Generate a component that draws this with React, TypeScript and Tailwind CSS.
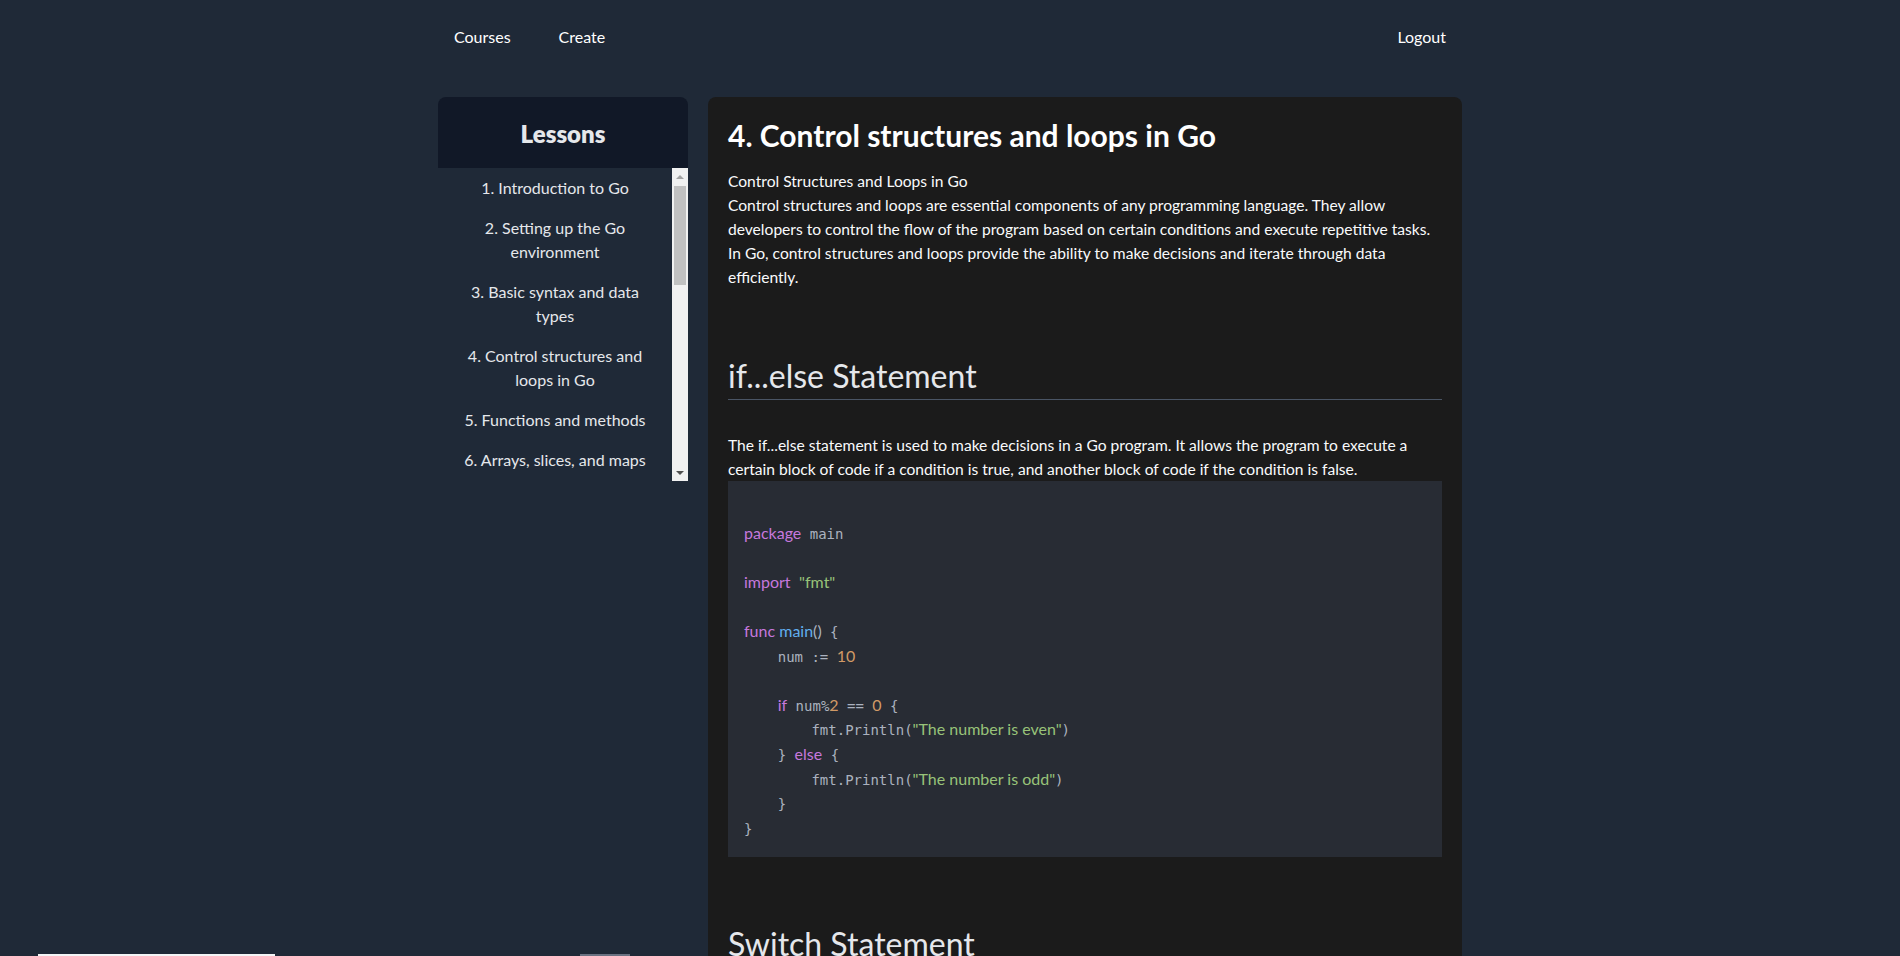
const lessons = [
  "1. Introduction to Go",
  "2. Setting up the Go environment",
  "3. Basic syntax and data types",
  "4. Control structures and loops in Go",
  "5. Functions and methods",
  "6. Arrays, slices, and maps",
  "7. Pointers and memory management",
  "8. Structs and interfaces",
  "9. Error handling",
  "10. Concurrency with goroutines",
  "11. Channels and synchronization",
  "12. Packages and modules",
  "13. File I/O",
  "14. Testing and benchmarking",
  "15. Building web applications",
  "16. Working with databases",
];

const lato = "[font-family:Lato,sans-serif] text-[16px] leading-[16px]";
const kw = `text-[#c678dd] ${lato}`;
const str = `text-[#98c379] ${lato}`;
const num = `text-[#d19a66] ${lato}`;
const fn = `text-[#61afef] ${lato}`;

const Nav = () => (
  <nav className="flex items-center justify-between pt-[17px] pb-4">
    <div className="flex gap-4">
      <a className="px-4 py-2 leading-6 text-white">Courses</a>
      <a className="px-4 py-2 leading-6 text-white">Create</a>
    </div>
    <a className="px-4 py-2 leading-6 text-white">Logout</a>
  </nav>
);

// the page's native scrollbar, drawn since the headless browser hides it
const Scrollbar = () => (
  <div className="flex w-4 shrink-0 flex-col bg-[#f1f1f1]">
    <div className="flex h-[17px] items-center justify-center">
      <span className="h-0 w-0 border-x-[4px] border-b-[4px] border-x-transparent border-b-[#a3a3a3]" />
    </div>
    <div className="mx-[2px] mt-px h-[99px] bg-[#c1c1c1]" />
    <div className="flex-1" />
    <div className="flex h-[17px] items-center justify-center">
      <span className="h-0 w-0 border-x-[4px] border-t-[4px] border-x-transparent border-t-[#505050]" />
    </div>
  </div>
);

const Sidebar = () => (
  <aside className="w-[250px] shrink-0 self-start">
    <div className="rounded-t-lg bg-[#111827] pt-[21px] pb-[18px] text-center">
      <h2 className="text-2xl font-extrabold leading-8 text-gray-200">Lessons</h2>
    </div>
    <div className="flex h-[313px]">
      <ul className="flex-1 overflow-hidden">
        {lessons.map((l) => (
          <li key={l} className="px-4 py-2 text-center leading-6 text-gray-200">
            {l}
          </li>
        ))}
      </ul>
      <Scrollbar />
    </div>
  </aside>
);

const CodeBlock = () => (
  <pre className="bg-[#282c34] p-4 text-[14px] leading-[24.6px] text-[#abb2bf] [font-family:'DejaVu_Sans_Mono',monospace]">
    {"\n"}
    <span className={kw}>package</span> main{"\n"}
    {"\n"}
    <span className={kw}>import</span> <span className={str}>"fmt"</span>
    {"\n"}
    {"\n"}
    <span className={kw}>func</span>
    <span className={lato}> </span>
    <span className={fn}>main</span>
    <span className={lato}>()</span> {"{"}
    {"\n"}
    {"    num := "}
    <span className={num}>10</span>
    {"\n"}
    {"\n"}
    {"    "}
    <span className={kw}>if</span> num%<span className={num}>2</span> =={" "}
    <span className={num}>0</span> {"{"}
    {"\n"}
    {"        fmt.Println("}
    <span className={str}>"The number is even"</span>){"\n"}
    {"    } "}
    <span className={kw}>else</span> {"{"}
    {"\n"}
    {"        fmt.Println("}
    <span className={str}>"The number is odd"</span>){"\n"}
    {"    }"}
    {"\n"}
    {"}"}
  </pre>
);

const Heading = ({ children }: { children: string }) => (
  <h2 className="mt-[68px] border-b border-gray-600 pb-1 text-[32px] leading-[38px] font-normal text-gray-200">
    {children}
  </h2>
);

const Lesson = () => (
  <main className="min-h-[900px] flex-1 rounded-lg bg-[#1b1b1b] px-5 pt-5 text-gray-50">
    <h1 className="mb-4 text-3xl font-bold leading-9 text-white">
      4. Control structures and loops in Go
    </h1>
    <p className="text-[15.6px] leading-6">
      Control Structures and Loops in Go
      <br />
      Control structures and loops are essential components of any programming language. They
      allow developers to control the flow of the program based on certain conditions and execute
      repetitive tasks. In Go, control structures and loops provide the ability to make decisions
      and iterate through data efficiently.
    </p>

    <Heading>if...else Statement</Heading>
    <p className="mt-[33px] text-[15.6px] leading-6">
      The if...else statement is used to make decisions in a Go program. It allows the program to
      execute a certain block of code if a condition is true, and another block of code if the
      condition is false.
    </p>
    <CodeBlock />

    <Heading>Switch Statement</Heading>
    <p className="mt-[33px] text-[15.6px] leading-6">
      The switch statement is used to select one of many blocks of code to be executed. It is a
      cleaner way to write long if...else chains.
    </p>
  </main>
);

export default function App() {
  return (
    <div className="min-h-screen overflow-hidden bg-[#1f2937] text-base [font-family:Lato,sans-serif]">
      <div className="mx-auto max-w-5xl">
        <Nav />
        <div className="mt-6 flex gap-5">
          <Sidebar />
          <Lesson />
        </div>
      </div>
      <div className="fixed bottom-0 left-[38px] h-[2px] w-[237px] bg-gray-100" />
      <div className="fixed bottom-0 left-[580px] h-[2px] w-[50px] bg-gray-500" />
    </div>
  );
}
